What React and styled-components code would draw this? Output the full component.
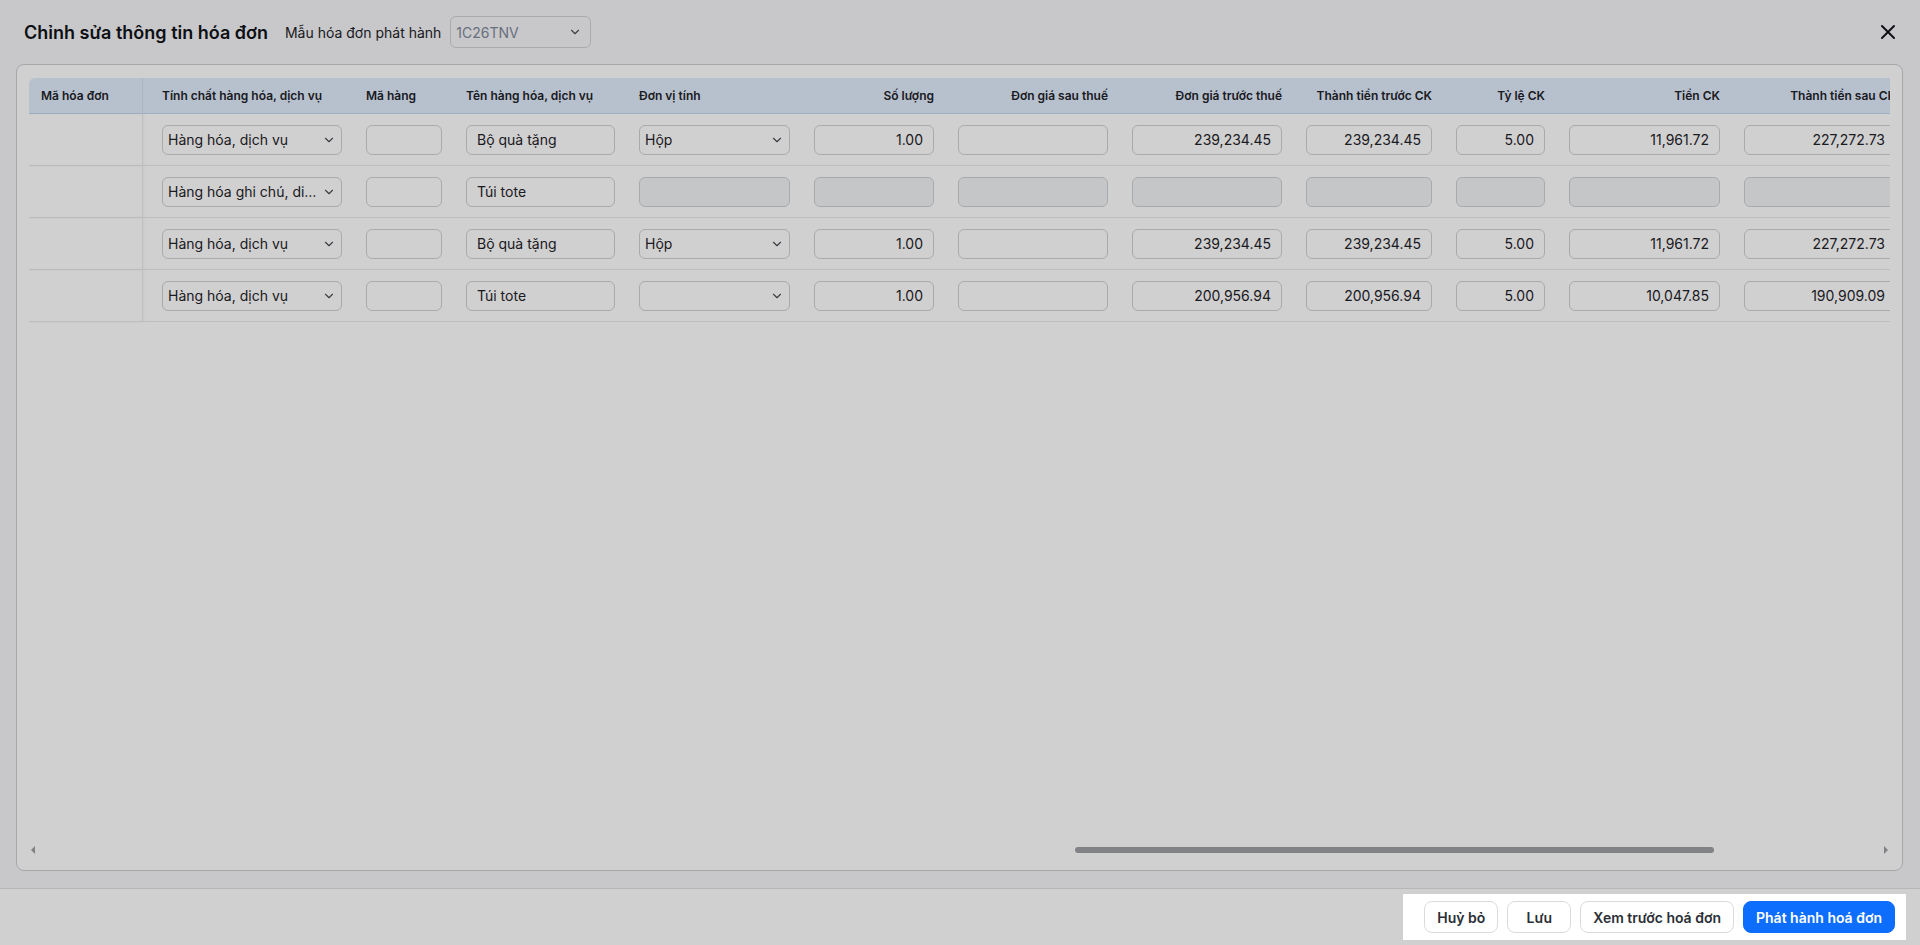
import React from "react";
import styled, { createGlobalStyle } from "styled-components";
import { X, ChevronDown } from "lucide-react";

const columns = [
  { key: "invoice", label: "Mã hóa đơn", width: 114, type: "empty", sticky: true },
  { key: "kind", label: "Tính chất hàng hóa, dịch vụ", width: 211, type: "select", padLeft: 19 },
  { key: "code", label: "Mã hàng", width: 100, type: "input" },
  { key: "name", label: "Tên hàng hóa, dịch vụ", width: 173, type: "input" },
  { key: "unit", label: "Đơn vị tính", width: 175, type: "select" },
  { key: "qty", label: "Số lượng", width: 144, type: "input", align: "right" },
  { key: "priceAfter", label: "Đơn giá sau thuế", width: 174, type: "input", align: "right" },
  { key: "priceBefore", label: "Đơn giá trước thuế", width: 174, type: "input", align: "right" },
  { key: "totalBefore", label: "Thành tiền trước CK", width: 150, type: "input", align: "right" },
  { key: "rate", label: "Tỷ lệ CK", width: 113, type: "input", align: "right" },
  { key: "discount", label: "Tiền CK", width: 175, type: "input", align: "right" },
  { key: "totalAfter", label: "Thành tiền sau CK", width: 176, type: "input", align: "right" },
];

const rows = [
  {
    kind: "Hàng hóa, dịch vụ", code: "", name: "Bộ quà tặng", unit: "Hộp", qty: "1.00", priceAfter: "",
    priceBefore: "239,234.45", totalBefore: "239,234.45", rate: "5.00", discount: "11,961.72", totalAfter: "227,272.73",
  },
  { kind: "Hàng hóa ghi chú, diễn giải", code: "", name: "Túi tote", note: true },
  {
    kind: "Hàng hóa, dịch vụ", code: "", name: "Bộ quà tặng", unit: "Hộp", qty: "1.00", priceAfter: "",
    priceBefore: "239,234.45", totalBefore: "239,234.45", rate: "5.00", discount: "11,961.72", totalAfter: "227,272.73",
  },
  {
    kind: "Hàng hóa, dịch vụ", code: "", name: "Túi tote", unit: "", qty: "1.00", priceAfter: "",
    priceBefore: "200,956.94", totalBefore: "200,956.94", rate: "5.00", discount: "10,047.85", totalAfter: "190,909.09",
  },
];

// only these stay editable on a note line
const noteEditable = ["kind", "code", "name"];

const tableWidth = columns.reduce((sum, c) => sum + c.width, 0);

const GlobalStyle = createGlobalStyle`
  * { box-sizing: border-box; }
  html, body { margin: 0; padding: 0; }
  body {
    font-family: Inter, "Noto Sans", "Liberation Sans", sans-serif;
    color: #1f2329;
    background: #f5f6f9;
  }
`;

const Page = styled.div`
  height: 100vh;
  display: flex;
  flex-direction: column;
  background: #f5f6f9;
`;

const TopBar = styled.div`
  height: 64px;
  flex-shrink: 0;
  display: flex;
  align-items: center;
  padding: 0 20px 0 24px;
`;

const Title = styled.h2`
  margin: 0;
  font-size: 18px;
  font-weight: 600;
  color: #111318;
`;

const TemplateLabel = styled.span`
  margin-left: 17px;
  font-size: 14px;
  color: #1f2329;
`;

const TemplateSelect = styled.div`
  margin-left: 9px;
  width: 141px;
  height: 32px;
  display: flex;
  align-items: center;
  justify-content: space-between;
  padding: 0 8px 0 5px;
  border: 1px solid #cfd1d5;
  border-radius: 6px;
  font-size: 14px;
  color: #7f8a99;
`;

const CloseButton = styled.button`
  margin-left: auto;
  width: 24px;
  height: 24px;
  padding: 0;
  border: 0;
  background: none;
  display: flex;
  color: #111318;
  cursor: pointer;
`;

const Body = styled.div`
  flex: 1;
  min-height: 0;
  display: flex;
  padding: 0 17px 17px 16px;
`;

const Panel = styled.div`
  flex: 1;
  min-width: 0;
  display: flex;
  flex-direction: column;
  background: #fff;
  border: 1px solid #cbcdd2;
  border-radius: 8px;
  padding: 13px 12px 12px;
`;

const TableViewport = styled.div`
  flex: 1;
  min-height: 0;
  overflow: hidden;
`;

const Table = styled.table`
  table-layout: fixed;
  border-collapse: separate;
  border-spacing: 0;
  width: ${(p) => p.$width}px;
`;

const Th = styled.th`
  height: 36px;
  padding: 0 12px 0 ${(p) => p.$padLeft || 12}px;
  background: #e1edfd;
  border-bottom: 1px solid #c3d8f3;
  font-size: 12px;
  font-weight: 600;
  color: #1f2329;
  text-align: ${(p) => p.$align || "left"};
  white-space: nowrap;
  overflow: hidden;
  border-right: ${(p) => (p.$sticky ? "1px solid #d3dfee" : "0")};
  box-shadow: ${(p) => (p.$sticky ? "1px 0 3px rgba(0, 0, 0, 0.04)" : "none")};

  &:first-child {
    border-top-left-radius: 6px;
  }
`;

const Td = styled.td`
  height: 52px;
  padding: 0 12px 0 ${(p) => p.$padLeft || 12}px;
  border-bottom: 1px solid #e8e8ea;
  vertical-align: middle;
  border-right: ${(p) => (p.$sticky ? "1px solid #ececef" : "0")};
  box-shadow: ${(p) => (p.$sticky ? "1px 0 3px rgba(0, 0, 0, 0.04)" : "none")};
`;

const Field = styled.div`
  width: 100%;
  height: 30px;
  display: flex;
  align-items: center;
  justify-content: ${(p) => (p.$align === "right" ? "flex-end" : "space-between")};
  gap: 4px;
  padding: ${(p) => (p.$select ? "0 5px 0 5px" : "0 10px")};
  background: ${(p) => (p.$disabled ? "#f2f3f6" : "#fff")};
  border: 1px solid #cfd1d4;
  border-radius: 6px;
  font-size: 14px;
  color: #1f2329;
  overflow: hidden;
`;

const FieldText = styled.span`
  min-width: 0;
  white-space: nowrap;
  overflow: hidden;
  text-overflow: ellipsis;
`;

const ScrollBar = styled.div`
  height: 16px;
  flex-shrink: 0;
  display: flex;
  align-items: center;
  gap: 6px;
  padding: 0 2px;
`;

const Arrow = styled.span`
  width: 0;
  height: 0;
  border-top: 4px solid transparent;
  border-bottom: 4px solid transparent;
  ${(p) => (p.$dir === "left" ? "border-right: 4px solid #9d9ea3;" : "border-left: 4px solid #9d9ea3;")}
`;

const Track = styled.div`
  flex: 1;
  height: 6px;
`;

const Thumb = styled.div`
  height: 6px;
  margin-left: ${(p) => p.$start}%;
  width: ${(p) => p.$size}%;
  border-radius: 3px;
  background: #9ea0a4;
`;

const Footer = styled.div`
  height: 57px;
  flex-shrink: 0;
  display: flex;
  align-items: center;
  justify-content: flex-end;
  padding-right: 14px;
  background: #fff;
  border-top: 1px solid #dee0e3;
`;

const Actions = styled.div`
  position: relative;
  z-index: 11;
  display: flex;
  gap: 9px;
  padding: 7px 11px 7px 21px;
  background: #fff;
`;

const Button = styled.button`
  height: 32px;
  min-width: 64px;
  padding: 0 12px;
  border-radius: 8px;
  font-family: inherit;
  font-size: 14px;
  font-weight: 600;
  cursor: pointer;
  border: 1px solid ${(p) => (p.$primary ? "#0d6efd" : "#d9dbdf")};
  background: ${(p) => (p.$primary ? "#0d6efd" : "#fff")};
  color: ${(p) => (p.$primary ? "#fff" : "#2b2f36")};
`;

// dims the whole screen, the action bar sits above it
const Dim = styled.div`
  position: fixed;
  inset: 0;
  z-index: 10;
  background: rgba(0, 0, 0, 0.185);
  pointer-events: none;
`;

function Cell({ column, row }) {
  if (column.type === "empty") return null;
  const disabled = row.note && !noteEditable.includes(column.key);
  const value = disabled ? "" : row[column.key];

  if (column.type === "select") {
    return (
      <Field $select $disabled={disabled}>
        <FieldText>{value}</FieldText>
        {!disabled && <ChevronDown size={14} strokeWidth={2} color="#4a4f57" style={{ flexShrink: 0 }} />}
      </Field>
    );
  }
  return (
    <Field $align={column.align} $disabled={disabled}>
      <FieldText>{value}</FieldText>
    </Field>
  );
}

export default function App() {
  return (
    <Page>
      <GlobalStyle />
      <TopBar>
        <Title>Chỉnh sửa thông tin hóa đơn</Title>
        <TemplateLabel>Mẫu hóa đơn phát hành</TemplateLabel>
        <TemplateSelect>
          <span>1C26TNV</span>
          <ChevronDown size={14} strokeWidth={2} color="#4a4f57" />
        </TemplateSelect>
        <CloseButton>
          <X size={24} strokeWidth={2} />
        </CloseButton>
      </TopBar>

      <Body>
        <Panel>
          <TableViewport>
            <Table $width={tableWidth}>
              <colgroup>
                {columns.map((c) => (
                  <col key={c.key} style={{ width: c.width }} />
                ))}
              </colgroup>
              <thead>
                <tr>
                  {columns.map((c) => (
                    <Th key={c.key} $align={c.align} $padLeft={c.padLeft} $sticky={c.sticky}>
                      {c.label}
                    </Th>
                  ))}
                </tr>
              </thead>
              <tbody>
                {rows.map((row, i) => (
                  <tr key={i}>
                    {columns.map((c) => (
                      <Td key={c.key} $padLeft={c.padLeft} $sticky={c.sticky}>
                        <Cell column={c} row={row} />
                      </Td>
                    ))}
                  </tr>
                ))}
              </tbody>
            </Table>
          </TableViewport>
          <ScrollBar>
            <Arrow $dir="left" />
            <Track>
              <Thumb $start={56.3} $size={34.8} />
            </Track>
            <Arrow $dir="right" />
          </ScrollBar>
        </Panel>
      </Body>

      <Footer>
        <Actions>
          <Button>Huỷ bỏ</Button>
          <Button>Lưu</Button>
          <Button>Xem trước hoá đơn</Button>
          <Button $primary>Phát hành hoá đơn</Button>
        </Actions>
      </Footer>
      <Dim />
    </Page>
  );
}
